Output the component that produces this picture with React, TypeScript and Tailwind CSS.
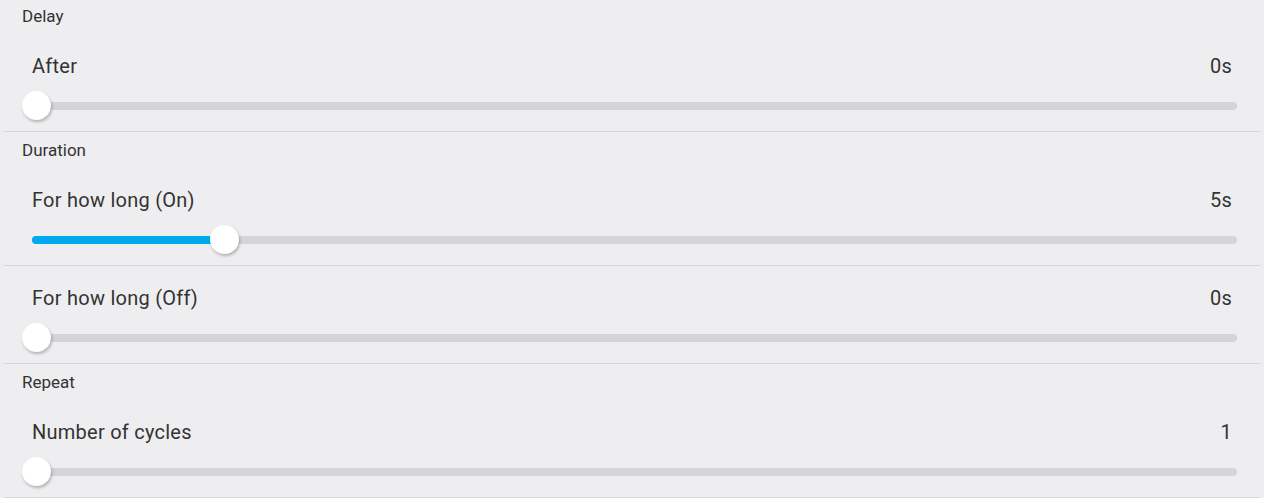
import React from "react";

type Item = { label: string; value: string; pos: number };
type Section = { title: string; items: Item[] };

const sections: Section[] = [
  { title: "Delay", items: [{ label: "After", value: "0s", pos: 0 }] },
  {
    title: "Duration",
    items: [
      { label: "For how long (On)", value: "5s", pos: 188 },
      { label: "For how long (Off)", value: "0s", pos: 0 },
    ],
  },
  { title: "Repeat", items: [{ label: "Number of cycles", value: "1", pos: 0 }] },
];

function Slider({ pos }: { pos: number }) {
  return (
    <div className="relative h-[29px] mx-[32px] mr-[27px] flex items-center">
      <div className="w-full h-[8px] rounded-full bg-[#d4d4d6]" />
      {pos > 0 && (
        <div
          className="absolute left-0 h-[8px] rounded-full bg-[#00aaf0]"
          style={{ width: pos + 4 }}
        />
      )}
      <div
        className="absolute top-0 w-[29px] h-[29px] rounded-full bg-white shadow-[1px_2px_3px_rgba(0,0,0,0.25)]"
        style={{ left: pos - 10 }}
      />
    </div>
  );
}

function Row({ item }: { item: Item }) {
  return (
    <div className="mx-[4px] border-b border-[#d6d6d8] h-[98px]">
      <div className="flex justify-between items-center pt-[20px] pl-[28px] pr-[28px] h-[44px] text-[20px] tracking-[0.25px] leading-[24px] text-[#333333]">
        <span>{item.label}</span>
        <span>{item.value}</span>
      </div>
      <div className="-mx-[4px] pt-[13px]">
        <Slider pos={item.pos} />
      </div>
    </div>
  );
}

export default function App() {
  return (
    <div
      className="w-[1264px] h-[498px] overflow-hidden bg-[#eeeef0]"
      style={{ fontFamily: "Roboto, 'Noto Sans', sans-serif" }}
    >
      <div className="-mt-[2px]">
        {sections.map((s) => (
          <div key={s.title}>
            <div className="h-[36px] pt-[8px] pl-[22px] text-[17px] leading-[20px] text-[#333333]">
              {s.title}
            </div>
            {s.items.map((it) => (
              <Row key={it.label} item={it} />
            ))}
          </div>
        ))}
      </div>
    </div>
  );
}
